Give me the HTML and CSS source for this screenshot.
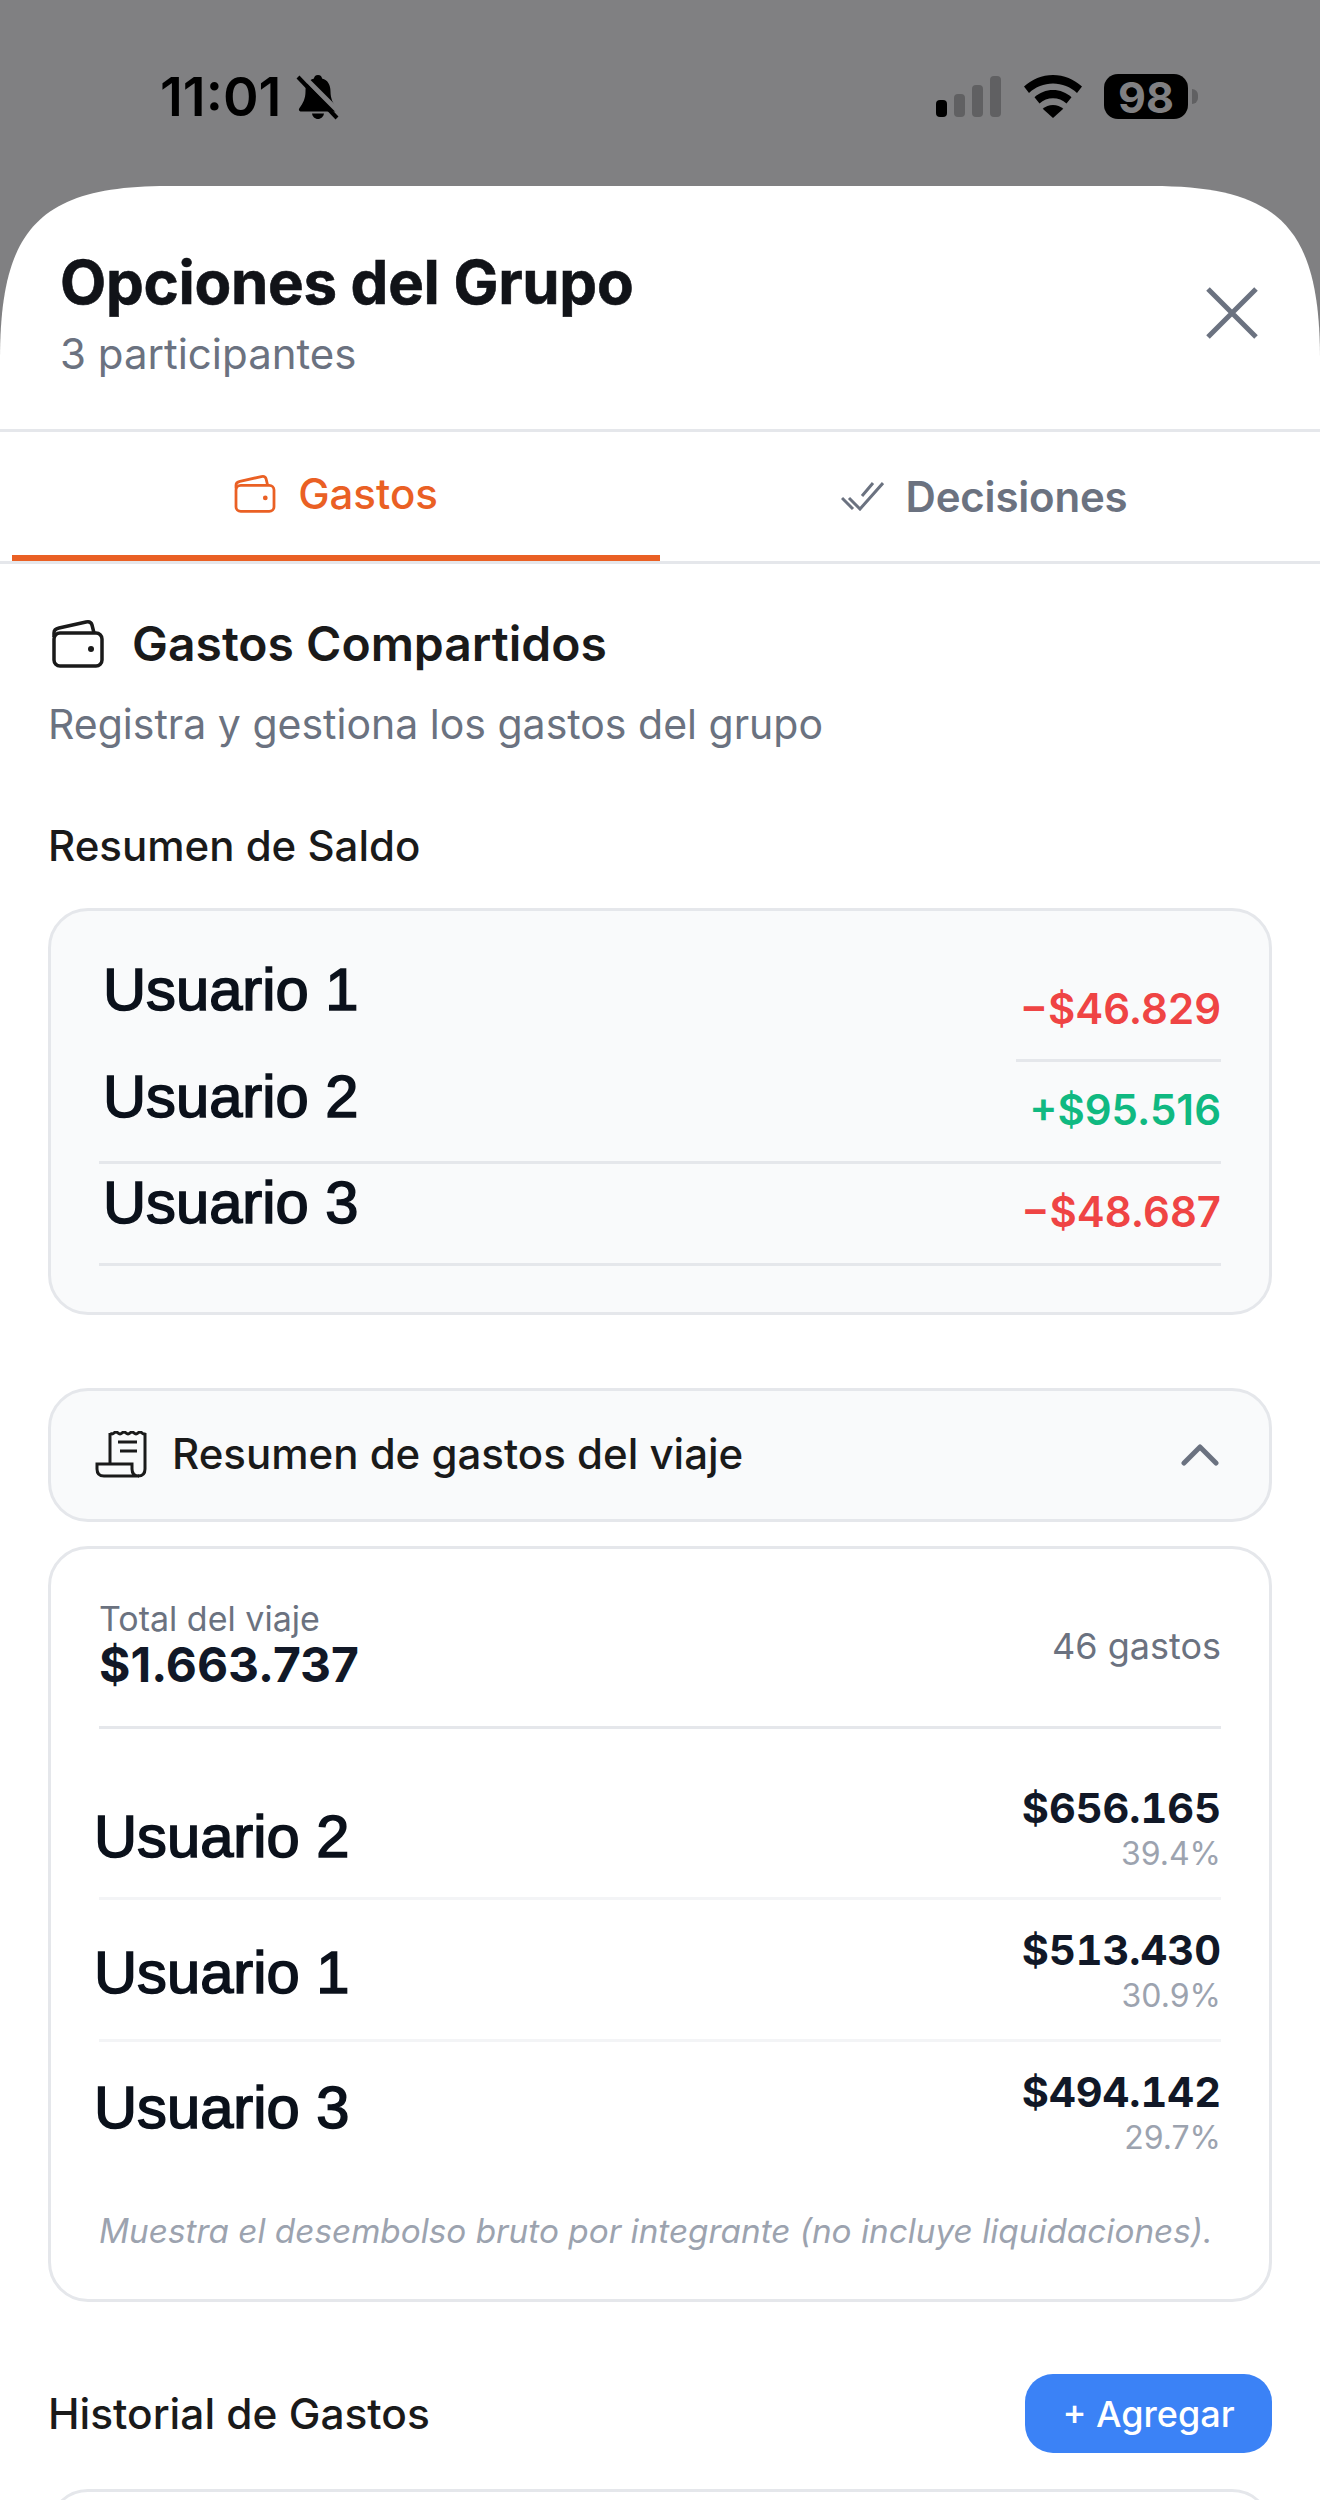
FILE: index.html
```html
<!DOCTYPE html>
<html lang="es">
<head>
  <meta charset="UTF-8" />
  <meta name="viewport" content="width=device-width, initial-scale=1" />
  <title>Opciones del Grupo</title>
  <link rel="stylesheet" href="styles.css">
</head>
<body>
  <!-- Barra de estado -->
  <div class="status-bar">
    <div class="status-left">
      <span class="status-time">11:01</span>
      <svg class="icon-bell" viewBox="0 0 42 46">
        <path d="M21 1c2.500 0 4 1.600 4 3.600 6 1.700 8.500 6.400 8.500 13 0 7 2.500 12 6 16.400 1.300 1.800.3 3.500-1.800 3.500H4.300c-2.100 0-3.100-1.700-1.800-3.500 3.500-4.400 6-9.400 6-16.400 0-6.600 2.500-11.300 8.500-13C17 2.600 18.500 1 21 1zM15 39.500h12c-.4 3-3 5.500-6 5.500s-5.600-2.500-6-5.500z"/>
        <path class="bell-gap" d="M3-1 45 41"/>
        <path class="bell-slash" d="M1 3 40 44"/>
      </svg>
    </div>
    <div class="status-right">
      <div class="signal">
        <span class="bar bar-1"></span>
        <span class="bar bar-2"></span>
        <span class="bar bar-3"></span>
        <span class="bar bar-4"></span>
      </div>
      <svg class="icon-wifi" viewBox="0 0 58 43">
        <path d="M29 0c11 0 21 4.300 29 11.500l-5 6.500C46.500 12 38 8.500 29 8.500S11.500 12 5 18l-5-6.500C8 4.300 18 0 29 0z"/>
        <path d="M29 15c7 0 13.500 2.700 18.500 7.200l-5 6.300C38.800 25.200 34 23.300 29 23.300s-9.800 1.900-13.500 5.200l-5-6.300C15.500 17.700 22 15 29 15z"/>
        <path d="M29 30c3.900 0 7.500 1.400 10.300 3.800L29 43 18.700 33.800C21.500 31.400 25.100 30 29 30z"/>
      </svg>
      <div class="battery"><span class="battery-level">98</span></div>
      <span class="battery-nub"></span>
    </div>
  </div>

  <div class="sheet">
    <!-- Encabezado -->
    <header class="sheet-header">
      <div>
        <h1 class="sheet-title">Opciones del Grupo</h1>
        <p class="sheet-subtitle">3 participantes</p>
      </div>
      <svg class="icon-close" viewBox="0 0 52 52">
        <path d="M2 2 50 50M50 2 2 50"/>
      </svg>
    </header>

    <!-- Pestañas -->
    <nav class="tabs">
      <div class="tab tab-active">
        <svg class="icon-tab-wallet" viewBox="0 0 52 48">
          <rect x="2" y="13" width="48" height="33" rx="6"/>
          <path d="M2 17v-4q0-4 5-5L34 2q5-1 6 3l2 8"/>
          <circle class="dot" cx="39" cy="29" r="3"/>
        </svg>
        <span>Gastos</span>
      </div>
      <div class="tab">
        <svg class="icon-checks" viewBox="0 0 43 29">
          <path d="M1 16 12 27M8 16 19 27 42 1M21 14 32 1"/>
        </svg>
        <span>Decisiones</span>
      </div>
    </nav>

    <main class="content">
      <div class="section-title">
        <svg class="icon-wallet" viewBox="0 0 52 48">
          <rect x="2" y="13" width="48" height="33" rx="6"/>
          <path d="M2 17v-4q0-4 5-5L34 2q5-1 6 3l2 8"/>
          <circle class="dot" cx="39" cy="29" r="3"/>
        </svg>
        <h2>Gastos Compartidos</h2>
      </div>
      <p class="section-desc">Registra y gestiona los gastos del grupo</p>

      <h3 class="label saldo-label">Resumen de Saldo</h3>

      <!-- Saldos por usuario -->
      <section class="card card-soft saldo">
        <div class="saldo-row saldo-row-1">
          <span class="name name-1">Usuario 1</span>
          <span class="saldo-amount negative">−$46.829</span>
        </div>
        <div class="saldo-row saldo-row-2">
          <span class="name name-2">Usuario 2</span>
          <span class="saldo-amount positive">+$95.516</span>
        </div>
        <div class="saldo-row saldo-row-3">
          <span class="name name-3">Usuario 3</span>
          <span class="saldo-amount negative">−$48.687</span>
        </div>
      </section>

      <!-- Resumen del viaje -->
      <section class="card card-soft collapse">
        <svg class="icon-receipt" viewBox="0 0 52 48">
          <path d="M15 2q2 2 4 0t4 0 4 0 4 0 4 0 4 0 4 0 4 0 3 0V38q0 7-7 7"/>
          <path d="M15 33V2"/>
          <path d="M2 33H37v5q0 7 7 7H9q-7 0-7-7z"/>
          <path d="M25 11H44M27 20H44" transform="translate(-2 0)"/>
        </svg>
        <span class="collapse-title">Resumen de gastos del viaje</span>
        <svg class="icon-chevron" viewBox="0 0 38 22">
          <path d="M3 19 19 3 35 19"/>
        </svg>
      </section>

      <section class="card totals">
        <div class="totals-head">
          <div>
            <div class="totals-label">Total del viaje</div>
            <div class="totals-amount">$1.663.737</div>
          </div>
          <span class="totals-count">46 gastos</span>
        </div>
        <div class="person person-1">
          <span class="name person-name">Usuario 2</span>
          <div class="person-values">
            <div class="person-amount">$656.165</div>
            <div class="person-pct">39.4%</div>
          </div>
        </div>
        <div class="person person-2">
          <span class="name person-name">Usuario 1</span>
          <div class="person-values">
            <div class="person-amount">$513.430</div>
            <div class="person-pct">30.9%</div>
          </div>
        </div>
        <div class="person person-3">
          <span class="name person-name">Usuario 3</span>
          <div class="person-values">
            <div class="person-amount">$494.142</div>
            <div class="person-pct">29.7%</div>
          </div>
        </div>
        <p class="totals-note">Muestra el desembolso bruto por integrante (no incluye liquidaciones).</p>
      </section>

      <!-- Historial -->
      <div class="history-head">
        <h3 class="label history-title">Historial de Gastos</h3>
        <button class="add-btn">+ Agregar</button>
      </div>
      <section class="card history-list"></section>
    </main>
  </div>
</body>
</html>
```

FILE: styles.css
```css
* {
  box-sizing: border-box;
}

html, body {
  margin: 0;
  padding: 0;
  height: 2500px;
  overflow: hidden;
  background: #808082;
  font-family: 'Inter', 'Liberation Sans', sans-serif;
  color: #1a1a1a;
}

h1, h2, h3, p {
  margin: 0;
}

/* =================
   BARRA DE ESTADO
   ================= */
.status-bar {
  height: 186px;
  padding: 74px 122px 0 160px;
  display: flex;
  justify-content: space-between;
  align-items: flex-start;
  color: #000;
}

.status-left {
  display: flex;
  align-items: center;
  gap: 15px;
}

.status-time {
  font-size: 54px;
  line-height: 46px;
  font-weight: 600;
}

.icon-bell {
  width: 44px;
  height: 46px;
  overflow: visible;
}

.bell-gap {
  fill: none;
  stroke: #808082;
  stroke-width: 5;
}

.bell-slash {
  fill: none;
  stroke: #000;
  stroke-width: 4;
}

.status-right {
  display: flex;
  align-items: flex-start;
}

.signal {
  display: flex;
  align-items: flex-end;
  gap: 7px;
  height: 43px;
  margin-right: 23px;
}

.bar {
  width: 11px;
  border-radius: 4px;
  background: #606062;
}

.bar-1 { height: 17px; background: #000; }
.bar-2 { height: 23px; }
.bar-3 { height: 32px; }
.bar-4 { height: 41px; }

.icon-wifi {
  width: 58px;
  height: 43px;
  margin-top: 1px;
  margin-right: 22px;
}

.battery {
  width: 84px;
  height: 45px;
  background: #000;
  border-radius: 14px;
  display: flex;
  align-items: center;
  justify-content: center;
}

.battery-level {
  font-size: 43px;
  font-weight: 700;
  color: #808082;
}

.battery-nub {
  width: 6px;
  height: 15px;
  margin: 15px 0 0 4px;
  background: #606062;
  border-radius: 0 8px 8px 0;
}

/* =================
   HOJA PRINCIPAL
   ================= */
.sheet {
  height: 2314px;
  background: #fff;
  clip-path: path('M0 174 C0 44 38 0 168 0 H1152 C1282 0 1320 44 1320 174 V2314 H0 Z');
}

.sheet-header {
  height: 243px;
  padding: 62px 62px 0 60px;
  display: flex;
  justify-content: space-between;
  align-items: flex-start;
}

.sheet-title {
  font-size: 60px;
  line-height: 68px;
  font-weight: 700;
  letter-spacing: -0.3px;
  -webkit-text-stroke: 0.6px #111318;
  color: #111318;
}

.sheet-subtitle {
  margin-top: 14px;
  font-size: 42px;
  line-height: 48px;
  color: #6b7280;
}

.icon-close {
  width: 52px;
  height: 52px;
  margin-top: 39px;
  fill: none;
  stroke: #6b7280;
  stroke-width: 5;
}

/* Pestañas */
.tabs {
  display: flex;
  height: 135px;
  padding: 0 12px;
  border-top: 3px solid #e5e7eb;
  border-bottom: 3px solid #e5e7eb;
}

.tab {
  flex: 1;
  display: flex;
  align-items: center;
  justify-content: center;
  gap: 22px;
  font-size: 42px;
  font-weight: 600;
  letter-spacing: -0.2px;
  color: #6b7280;
}

.tab-active {
  color: #ea6024;
  font-weight: 500;
  letter-spacing: 0;
  border-bottom: 6px solid #ea6024;
}

.icon-tab-wallet {
  width: 42px;
  height: 38px;
  fill: none;
  stroke: #ea6024;
  stroke-width: 3.500;
}

.icon-tab-wallet .dot,
.icon-wallet .dot {
  stroke: none;
}

.icon-tab-wallet .dot {
  fill: #ea6024;
}

.icon-checks {
  width: 43px;
  height: 29px;
  fill: none;
  stroke: #6b7280;
  stroke-width: 3;
}

.content {
  padding: 52px 48px 0;
}

.section-title {
  display: flex;
  align-items: center;
  gap: 28px;
  padding-left: 4px;
}

.section-title h2 {
  font-size: 48px;
  line-height: 56px;
  font-weight: 600;
}

.icon-wallet {
  width: 52px;
  height: 48px;
  fill: none;
  stroke: #1a1a1a;
  stroke-width: 3.500;
}

.icon-wallet .dot {
  fill: #1a1a1a;
}

.section-desc {
  margin-top: 26px;
  font-size: 41px;
  line-height: 52px;
  color: #6b7280;
}

.label {
  font-size: 42px;
  line-height: 48px;
  font-weight: 500;
  color: #1a1a1a;
}

.saldo-label {
  margin-top: 72px;
}

.history-title {
  font-size: 42.400px;
}

.card {
  border: 3px solid #e5e7eb;
  border-radius: 40px;
  background: #fff;
}

.card-soft {
  background: #f9fafb;
}

/* Nombres de usuario */
.name {
  font-family: 'Liberation Sans', Arial, sans-serif;
  font-size: 59.700px;
  line-height: 66px;
  -webkit-text-stroke: 1.6px #0b111b;
  color: #0b111b;
}

/* =================
   RESUMEN DE SALDO
   ================= */
.saldo {
  margin-top: 38px;
  height: 407px;
  padding: 50px 48px 0 48px;
}

.saldo-row {
  display: flex;
  justify-content: space-between;
  align-items: flex-start;
  height: 102px;
  border-bottom: 3px solid #e5e7eb;
}

.saldo-row-1 {
  height: 101px;
  border-bottom: none;
  position: relative;
}

/* Esta línea solo se ve del lado derecho */
.saldo-row-1::after {
  content: '';
  position: absolute;
  right: 0;
  bottom: 0;
  width: 205px;
  height: 3px;
  background: #e5e7eb;
}

.saldo-amount {
  margin-top: 24px;
  font-size: 42px;
  line-height: 48px;
  font-weight: 600;
}

.negative { color: #ef4444; }
.positive { color: #10b981; }

.name-1 { margin: -4px 0 0 4px; }
.name-2 { margin: 2px 0 0 4px; }
.name-3 { margin: 6px 0 0 4px; }

/* =================
   RESUMEN DE GASTOS
   ================= */
.collapse {
  margin-top: 73px;
  height: 134px;
  padding: 0 50px 0 44px;
  display: flex;
  align-items: center;
}

.icon-receipt {
  width: 52px;
  height: 48px;
  fill: none;
  stroke: #1a1a1a;
  stroke-width: 3;
}

.collapse-title {
  flex: 1;
  margin: 0 0 3px 25px;
  font-size: 42px;
  font-weight: 500;
}

.icon-chevron {
  width: 38px;
  height: 22px;
  fill: none;
  stroke: #6b7280;
  stroke-width: 5;
  stroke-linecap: round;
  stroke-linejoin: round;
}

.totals {
  margin-top: 24px;
  height: 756px;
  padding: 43px 48px 0 48px;
}

.totals-head {
  display: flex;
  justify-content: space-between;
  align-items: center;
  height: 137px;
  border-bottom: 3px solid #e5e7eb;
  padding-bottom: 27px;
}

.totals-label {
  font-size: 34px;
  line-height: 38px;
  color: #6b7280;
}

.totals-amount {
  font-size: 48px;
  line-height: 54px;
  font-weight: 700;
  color: #111827;
}

.totals-count {
  font-size: 36px;
  color: #6b7280;
}

.person {
  display: flex;
  justify-content: space-between;
  align-items: flex-start;
  height: 142px;
  border-bottom: 3px solid #f3f4f6;
}

.person-1 {
  height: 171px;
  padding-top: 29px;
}

.person-3 {
  border-bottom: none;
}

.person-name {
  margin-left: -5px;
}

.person-1 .person-name { margin-top: 46px; }
.person-2 .person-name { margin-top: 40px; }
.person-3 .person-name { margin-top: 33px; }

.person-values {
  margin-top: 27px;
  text-align: right;
}

.person-amount {
  font-size: 41.500px;
  line-height: 46px;
  font-weight: 700;
  font-variant-numeric: tabular-nums;
  color: #111827;
}

.person-pct {
  font-size: 32px;
  line-height: 46px;
  color: #9ca3af;
}

.totals-note {
  margin-top: 25px;
  font-size: 33.300px;
  line-height: 44px;
  font-style: italic;
  color: #9ca3af;
}

/* =================
   HISTORIAL
   ================= */
.history-head {
  display: flex;
  justify-content: space-between;
  align-items: center;
  margin-top: 72px;
}

.add-btn {
  width: 247px;
  height: 79px;
  border: none;
  border-radius: 28px;
  background: #3b82f6;
  color: #fff;
  font-family: inherit;
  font-size: 36px;
  font-weight: 500;
}

.history-list {
  margin-top: 36px;
  height: 120px;
}
```
